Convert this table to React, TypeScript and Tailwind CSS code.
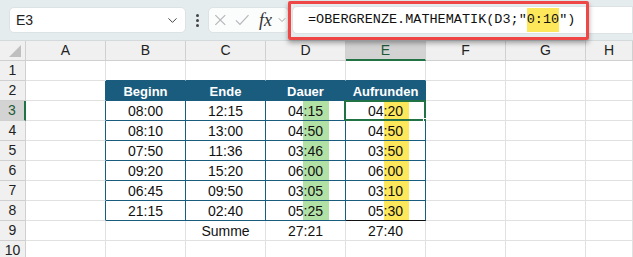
import { ChevronDown } from "lucide-react";

const COLS = ["A", "B", "C", "D", "E", "F", "G", "H"];

// rows 1..10, columns A..H
const rows: string[][] = [
  ["", "", "", "", "", "", "", ""],
  ["", "Beginn", "Ende", "Dauer", "Aufrunden", "", "", ""],
  ["", "08:00", "12:15", "04:15", "04:20", "", "", ""],
  ["", "08:10", "13:00", "04:50", "04:50", "", "", ""],
  ["", "07:50", "11:36", "03:46", "03:50", "", "", ""],
  ["", "09:20", "15:20", "06:00", "06:00", "", "", ""],
  ["", "06:45", "09:50", "03:05", "03:10", "", "", ""],
  ["", "21:15", "02:40", "05:25", "05:30", "", "", ""],
  ["", "", "Summe", "27:21", "27:40", "", "", ""],
  ["", "", "", "", "", "", "", ""],
];

function cellClass(r: number, c: number) {
  // r: 1-based row, c: 0-based column (0 = A)
  const inTable = c >= 1 && c <= 4;
  const classes = ["relative flex items-center justify-center border-r border-b pt-[2px]"];

  // right border
  if (c <= 4 && r >= 2 && r <= 8) classes.push("border-r-[#1a5c7e]");
  else classes.push("border-r-[#e1e1e1]");

  // bottom border
  if (inTable && r >= 1 && r <= 7) classes.push("border-b-[#1a5c7e]");
  else if (r === 8 && c === 4) classes.push("border-b-[#111111]");
  else if (r === 8 && inTable) classes.push("border-b-[#1a5c7e]");
  else classes.push("border-b-[#e1e1e1]");

  if (r === 2 && inTable) classes.push("bg-[#1a5c7e] text-white font-bold text-[13px]");
  else classes.push("bg-white text-[#111] text-[14px]");

  return classes.join(" ");
}

function FormulaBar() {
  return (
    <div className="relative flex h-[40px] items-center bg-[#e4ecee]">
      <div className="ml-[9px] flex h-[26px] w-[177px] items-center justify-between rounded-[5px] border border-[#dde3e5] bg-white pl-[6px] pr-[5px] text-[14px] text-[#222]">
        <span>E3</span>
        <ChevronDown size={15} strokeWidth={1.6} className="text-[#444]" />
      </div>
      <div className="flex w-[22px] flex-col items-center gap-[2px]">
        <span className="h-[3px] w-[3px] rounded-full bg-[#444]" />
        <span className="h-[3px] w-[3px] rounded-full bg-[#444]" />
        <span className="h-[3px] w-[3px] rounded-full bg-[#444]" />
      </div>
      <div className="flex h-[26px] w-[81px] items-center gap-[8px] overflow-hidden rounded-[5px] border border-[#dde3e5] bg-[#fbfcfc] pl-[5px]">
        <svg width="14" height="14" viewBox="0 0 14 14" fill="none" stroke="#b4b8ba" strokeWidth="1.3">
          <path d="M1.5 1.5l11 11M12.5 1.5l-11 11" />
        </svg>
        <svg width="16" height="14" viewBox="0 0 16 14" fill="none" stroke="#b4b8ba" strokeWidth="1.3">
          <path d="M1 7.5l4.5 4.5L15 1.5" />
        </svg>
        <span className="ml-[2px] text-[18px] italic leading-none text-[#333] [font-family:'Liberation_Serif',serif]">fx</span>
        <ChevronDown size={12} strokeWidth={1.5} className="-ml-[4px] shrink-0 text-[#888]" />
      </div>
      <div className="ml-[3px] flex h-[28px] flex-1 items-center rounded-l-[5px] border border-[#dde3e5] bg-white pl-[15px] text-[13.5px] text-[#111] [font-family:'Liberation_Mono',monospace]">
        <span>=OBERGRENZE.MATHEMATIK(D3;"</span>
        <span className="bg-[#fde75b] py-[2px]">0:10</span>
        <span>")</span>
      </div>
      {/* annotation box */}
      <div className="absolute left-[288px] top-[1px] h-[39px] w-[301px] rounded-[2px] border-[3px] border-[#ef4646] shadow-[0_3px_5px_rgba(0,0,0,0.35)]" />
    </div>
  );
}

export default function App() {
  return (
    <div className="h-[257px] w-[633px] overflow-hidden bg-white [font-family:'Liberation_Sans',Arial,sans-serif]">
      <FormulaBar />
      <div className="grid grid-cols-[26px_repeat(7,80px)_1fr] auto-rows-[20px] border-t border-[#d4dadc]">
        {/* column header row */}
        <div className="relative border-r border-b border-[#d0d0d0] bg-[#f0f0f0]">
          <svg className="absolute right-[4px] bottom-[3px]" width="12" height="12" viewBox="0 0 12 12">
            <path d="M12 0V12H0Z" fill="#bfbfbf" />
          </svg>
        </div>
        {COLS.map((col) => (
          <div
            key={col}
            className={
              col === "E"
                ? "flex items-center justify-center border-r border-[#d0d0d0] border-b-2 border-b-[#217346] bg-[#d3d3d3] text-[14px] text-[#1e5a37]"
                : "flex items-center justify-center border-r border-b border-[#d0d0d0] bg-[#f0f0f0] text-[14px] text-[#222]"
            }
          >
            {col}
          </div>
        ))}

        {rows.map((row, ri) => {
          const r = ri + 1;
          return [
            <div
              key={`h${r}`}
              className={
                r === 3
                  ? "flex items-center justify-center border-b border-[#d0d0d0] border-r-2 border-r-[#217346] bg-[#d3d3d3] text-[14px] text-[#1e5a37]"
                  : "flex items-center justify-center border-r border-b border-[#d0d0d0] bg-[#f0f0f0] text-[14px] text-[#222]"
              }
            >
              {r}
            </div>,
            ...row.map((val, c) => (
              <div key={`c${r}-${c}`} className={cellClass(r, c)}>
                {c === 3 && r >= 3 && r <= 8 && (
                  <span className="absolute inset-y-0 left-[37px] w-[26px] bg-[#b2e1a6]" />
                )}
                {c === 4 && r >= 3 && r <= 8 && (
                  <span className="absolute inset-y-0 left-[38px] w-[25px] bg-[#fde75b]" />
                )}
                <span className="relative">{val}</span>
                {c === 4 && r === 3 && (
                  <>
                    <span className="absolute -left-[2px] -top-[1px] -right-[1px] -bottom-[1px] border-2 border-[#217346]" />
                    <span className="absolute -right-[3px] -bottom-[3px] h-[5px] w-[5px] border border-white bg-[#217346]" />
                  </>
                )}
              </div>
            )),
          ];
        })}
      </div>
    </div>
  );
}
